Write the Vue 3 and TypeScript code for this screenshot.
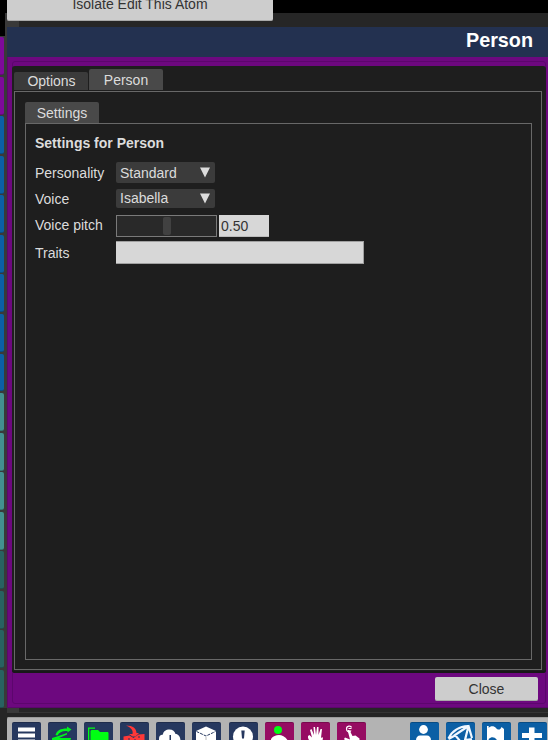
<script setup lang="ts">
import { ref } from 'vue'

type Tone = 'violet' | 'blue' | 'teal' | 'deep'
interface Tool { name: string; tone: 'navy' | 'magenta' | 'azure' }

const cells: Tone[] = [
  'violet', 'violet',
  'blue', 'blue', 'blue', 'blue', 'blue', 'blue', 'blue',
  'teal', 'teal', 'teal', 'teal',
  'deep', 'deep', 'deep', 'deep',
]
const mainTools: Tool[] = [
  { name: 'menu', tone: 'navy' },
  { name: 'open', tone: 'navy' },
  { name: 'folder', tone: 'navy' },
  { name: 'save', tone: 'navy' },
  { name: 'cloud', tone: 'navy' },
  { name: 'box', tone: 'navy' },
  { name: 'alert', tone: 'navy' },
  { name: 'select', tone: 'magenta' },
  { name: 'hand', tone: 'magenta' },
  { name: 'touch', tone: 'magenta' },
]
const sceneTools: Tool[] = [
  { name: 'person', tone: 'azure' },
  { name: 'mesh', tone: 'azure' },
  { name: 'flag', tone: 'azure' },
  { name: 'plus', tone: 'azure' },
]
const groups = [mainTools, sceneTools]
const selects = [
  { label: 'Personality', value: 'Standard' },
  { label: 'Voice', value: 'Isabella' },
]
const pitch = ref(0.5)
const traits = ref('')
</script>

<template>
  <div class="screen">
    <aside class="rail">
      <span v-for="(tone, i) in cells" :key="i" class="cell" :class="tone"></span>
    </aside>
    <main class="column">
      <div class="top">
        <button class="btn isolate">Isolate Edit This Atom</button>
      </div>
      <header class="title">Person</header>
      <section class="frame">
        <div class="panel">
          <nav class="tabs">
            <span class="tab options">Options</span>
            <span class="tab active">Person</span>
          </nav>
          <div class="outer">
            <span class="tab active settings">Settings</span>
            <div class="inner">
              <h2>Settings for Person</h2>
              <div class="form">
                <template v-for="s in selects" :key="s.label">
                  <label>{{ s.label }}</label>
                  <div class="select">
                    <span>{{ s.value }}</span>
                    <svg width="10" height="11" viewBox="0 0 10 11"><path d="M0 .5H10L5 10.5Z" fill="#dcdcdc" /></svg>
                  </div>
                </template>
                <label>Voice pitch</label>
                <div class="pitch">
                  <div class="slider"><span class="thumb"></span></div>
                  <div class="number">{{ pitch.toFixed(2) }}</div>
                </div>
                <label>Traits</label>
                <div class="traits">{{ traits }}</div>
              </div>
            </div>
          </div>
        </div>
        <div class="footer"><button class="btn close">Close</button></div>
      </section>
      <div class="divider"></div>
      <footer class="toolbar">
        <div v-for="(group, g) in groups" :key="g" class="group">
          <span v-for="tool in group" :key="tool.name" class="tool" :class="tool.tone">
            <svg width="28" height="28" viewBox="0 0 28 28" fill="#fff">
              <g v-if="tool.name === 'menu'">
                <path d="M6 5.500h17v4H6zM6 11.500h17v4H6zM6 17.500h17v4H6z" />
              </g>
              <g v-else-if="tool.name === 'open'" fill="#00f31c">
                <path d="M7.500 13C9 8.500 12 6.500 19 6.500V4.500l4.500 3-4 3V9c-5-.5-8 1-10 4.500z" />
                <path d="M4 16l5-1.500 10-3.500v1.500L11 16h12l-2 9H4z" />
              </g>
              <g v-else-if="tool.name === 'folder'" fill="#00ff13">
                <path d="M4 5.500h7v1.200H5.300V24H4z" />
                <path d="M6.500 9l1-1H14l2 2H24l.5 1V24h-18z" />
              </g>
              <g v-else-if="tool.name === 'save'" fill="#ff3838">
                <path d="M6 3.500c7 0 10.500 3 10.500 7.500H19l-3.500 3.500h-3L9 12h3.500c1-4-2-6.500-6.500-8.500z" />
                <path d="M3.500 14.500l6-1 4 2.500 5-3.500 6-.5v13h-21z" />
                <path d="M8 17h2M18 15h2M14 18h2" stroke="#26385f" />
              </g>
              <g v-else-if="tool.name === 'cloud'">
                <path d="M3 17c0-3 1-4 4-4.500C7 9.500 10 7.500 13.500 7.500c3 0 5.500 2 6 4.500 3 0 5 3 5 7 0 4-3 5-5 5H8c-3 0-5-3-5-7z" />
                <path d="M13.500 13h1.500v8h-1.500z" fill="#26385f" />
              </g>
              <g v-else-if="tool.name === 'box'">
                <path d="M14 4.500l10 4.500v12l-10 5-10-5V9z" />
                <path d="M4.500 9.500L14 14l9.500-4.500" fill="none" stroke="#26385f" stroke-dasharray="3 1" />
                <path d="M14 15v11" stroke="#bbb" />
              </g>
              <g v-else-if="tool.name === 'alert'">
                <circle cx="14" cy="14.500" r="10" />
                <path d="M12.300 8.500h3.400l-.7 8h-2zM13 18h2v3h-2z" fill="#26385f" />
              </g>
              <g v-else-if="tool.name === 'select'">
                <circle cx="13" cy="8" r="4" fill="#00ff13" />
                <path d="M6 17c2-3 5-4 8-4s7 2 9 6v6H6z" />
              </g>
              <g v-else-if="tool.name === 'hand'">
                <path d="M7 14l1.500-1 2.500 2.500L9 8l1.500-1 2.500 6-.5-8H14l1 8 1-8h1.500v8l2-6H21l-1 9 1.500-1 .5 2-3 5c0 4-3 5-5 5-4 0-4-5-7-11z" />
              </g>
              <g v-else-if="tool.name === 'touch'">
                <path d="M14.500 5.500C14 3.500 9.500 3.500 9.500 7s3.500 3.500 4.500 1.500M11.500 6.500h3" fill="none" stroke="#fff" stroke-width="1.200" />
                <path d="M10.500 8h2l3 6 3-.5 4 3v8h-9L7 17l1-1.500 5 2z" />
              </g>
              <g v-else-if="tool.name === 'person'">
                <circle cx="13.500" cy="7.500" r="4.400" />
                <path d="M6 18c0-3 2-4.500 4-4.500h7c2 0 4 1.500 4 4.500v9H6z" />
              </g>
              <g v-else-if="tool.name === 'mesh'" fill="none" stroke="#f0f7ff" stroke-width="2.200">
                <path d="M2.500 16.500C6 9 12 4.500 22.500 4L26 16M22.500 4L9 13l5 6M9 13.500l-6.500 3.500M22.500 4L19 18l7-1" />
              </g>
              <g v-else-if="tool.name === 'flag'">
                <path d="M5 4h1.700v22H5zM6.700 6C8 4 12 3.500 14 6s4.500 2 5.500-1l2.500 2v12c-3 1-5.500 1-7.500-1.500s-5-3-7.800-.5z" />
              </g>
              <path v-else d="M11 5.500h5.500V11H24v5h-7.500v8H11v-8H4v-5h7z" />
            </svg>
          </span>
        </div>
      </footer>
    </main>
  </div>
</template>

<style>
html, body { margin: 0; background: #262626; overflow: hidden; }
</style>

<style scoped>
* { box-sizing: border-box; }
.screen {
  width: 548px; height: 740px; overflow: hidden; display: flex;
  font: 14px/16px "Liberation Sans", Arial, sans-serif; color: #dcdcdc;
  background: #262626;
}
.rail {
  width: 7px; flex: none; height: 708px; padding: 37px 3px 0 0;
  display: grid; grid-template-rows: repeat(17, 1fr); row-gap: 1.6px;
  background: linear-gradient(#000 36px, transparent 36px) 0 0 / 5px 100% no-repeat, linear-gradient(#000 13px, #393939 13px);
}
.cell { border-radius: 0 2px 2px 0; border-bottom: 1px solid #0003; }
.violet { background: #7e0a9a; }
.blue { background: #0b5fa5; }
.teal { background: #43908f; }
.deep { background: #286260; }
.column { flex: 1; min-width: 0; display: flex; flex-direction: column; }
.column > * { flex: none; }
.top { display: flow-root; height: 27px; background: linear-gradient(90deg, #393939 12px, transparent 12px) 0 20px / 100% 7px no-repeat, linear-gradient(#000 13px, #262626 13px); }
.btn {
  display: block; border: 0; border-radius: 2px; padding: 0; color: #333;
  font: inherit; background: #cdcdcd; border-bottom: 1px solid #a9a9a9;
}
.isolate { width: 266px; height: 33px; margin-top: -12px; line-height: 16px; border-radius: 0 0 2px 2px; }
.title {
  height: 30px; padding: 2px 15px 0 0; background: #233150; text-align: right;
  font-weight: bold; font-size: 19.8px; line-height: 23px; color: #fff;
}
.frame { height: 651px; padding: 9px 2px 0 5px; background: #6d087f; box-shadow: inset 1px -1px #5b086b; position: relative; }
.frame::before {
  content: ""; position: absolute; left: 5px; right: 2px; top: 4px; bottom: 4px;
  border: 1px solid #5c066d; border-radius: 3px; pointer-events: none;
}
.panel { position: relative; height: 607px; padding: 3px 4px 0 2px; background: #1e1e1e; border-radius: 3px; box-shadow: inset 0 -2px #181818; }
.tabs { display: flex; align-items: flex-end; height: 21px; gap: 1px; }
.tab { display: flex; justify-content: center; width: 74px; height: 22px; border-radius: 2px 2px 0 0; background: #494949; flex: none; padding-top: 3px; }
.tabs .tab.active { height: 21px; }
.tab.options { height: 18px; background: #3b3b3b; padding: 1px 0 0 1px; }
.outer { height: 579px; margin-top: 1px; padding: 10px 9px 8px 10px; border: 1px solid #686868; }
.tab.settings { height: 21px; }
.inner { height: 537px; padding: 11px 9px; border: 1px solid #686868; }
h2 { margin: 0; font-size: 14px; line-height: 16px; }
.form { margin-top: 11px; display: grid; grid-template-columns: 81px 1fr; grid-template-rows: 21px 20px 23px 23px; row-gap: 5px; align-items: center; }
.form label { padding-top: 1px; }
.select { width: 99px; height: 21px; padding: 0 5px 0 4px; display: flex; align-items: center; justify-content: space-between; background: #3b3b3b; border-radius: 2px; }
.select + label + .select { height: 19px; }
.pitch { display: flex; gap: 2px; align-self: start; margin: 2px 0 -1px; }
.slider { width: 101px; height: 22px; border: 1px solid #7a7a7a; background: #292929; display: flex; justify-content: center; padding: 1px; }
.thumb { width: 8px; background: #414141; border-radius: 2px; }
.number { width: 50px; height: 22px; padding: 3px 2px; background: #d7d7d7; color: #333; border-bottom: 1px solid #bbb; }
.traits { width: 248px; height: 23px; background: #d7d7d7; border: 1px solid #a0a0a0; border-left: 0; }
.footer { position: relative; display: flex; justify-content: flex-end; padding: 4px 8px 0 0; }
.close { width: 103px; height: 24px; }
.divider { height: 9px; background: linear-gradient(90deg, #393939 12px, transparent 12px) 0 0 / 100% 5px no-repeat, linear-gradient(#262626 4px, #343434 4px 5px, #242424 5px); }
.toolbar { height: 23px; overflow: hidden; display: flex; gap: 44px; padding: 5px 0 0 5px; background: #b3b3b3; border-radius: 2px 0 0; box-shadow: inset 0 1px #9b9b9b; }
.group { display: flex; gap: 7.1px; }
.tool { width: 29px; height: 29px; border-radius: 2px; box-shadow: inset 0 1px #0003; flex: none; overflow: hidden; }
.tool svg { display: block; }
.navy { background: #26385f; }
.magenta { background: #960c62; }
.azure { background: #0b5fa5; }
</style>
